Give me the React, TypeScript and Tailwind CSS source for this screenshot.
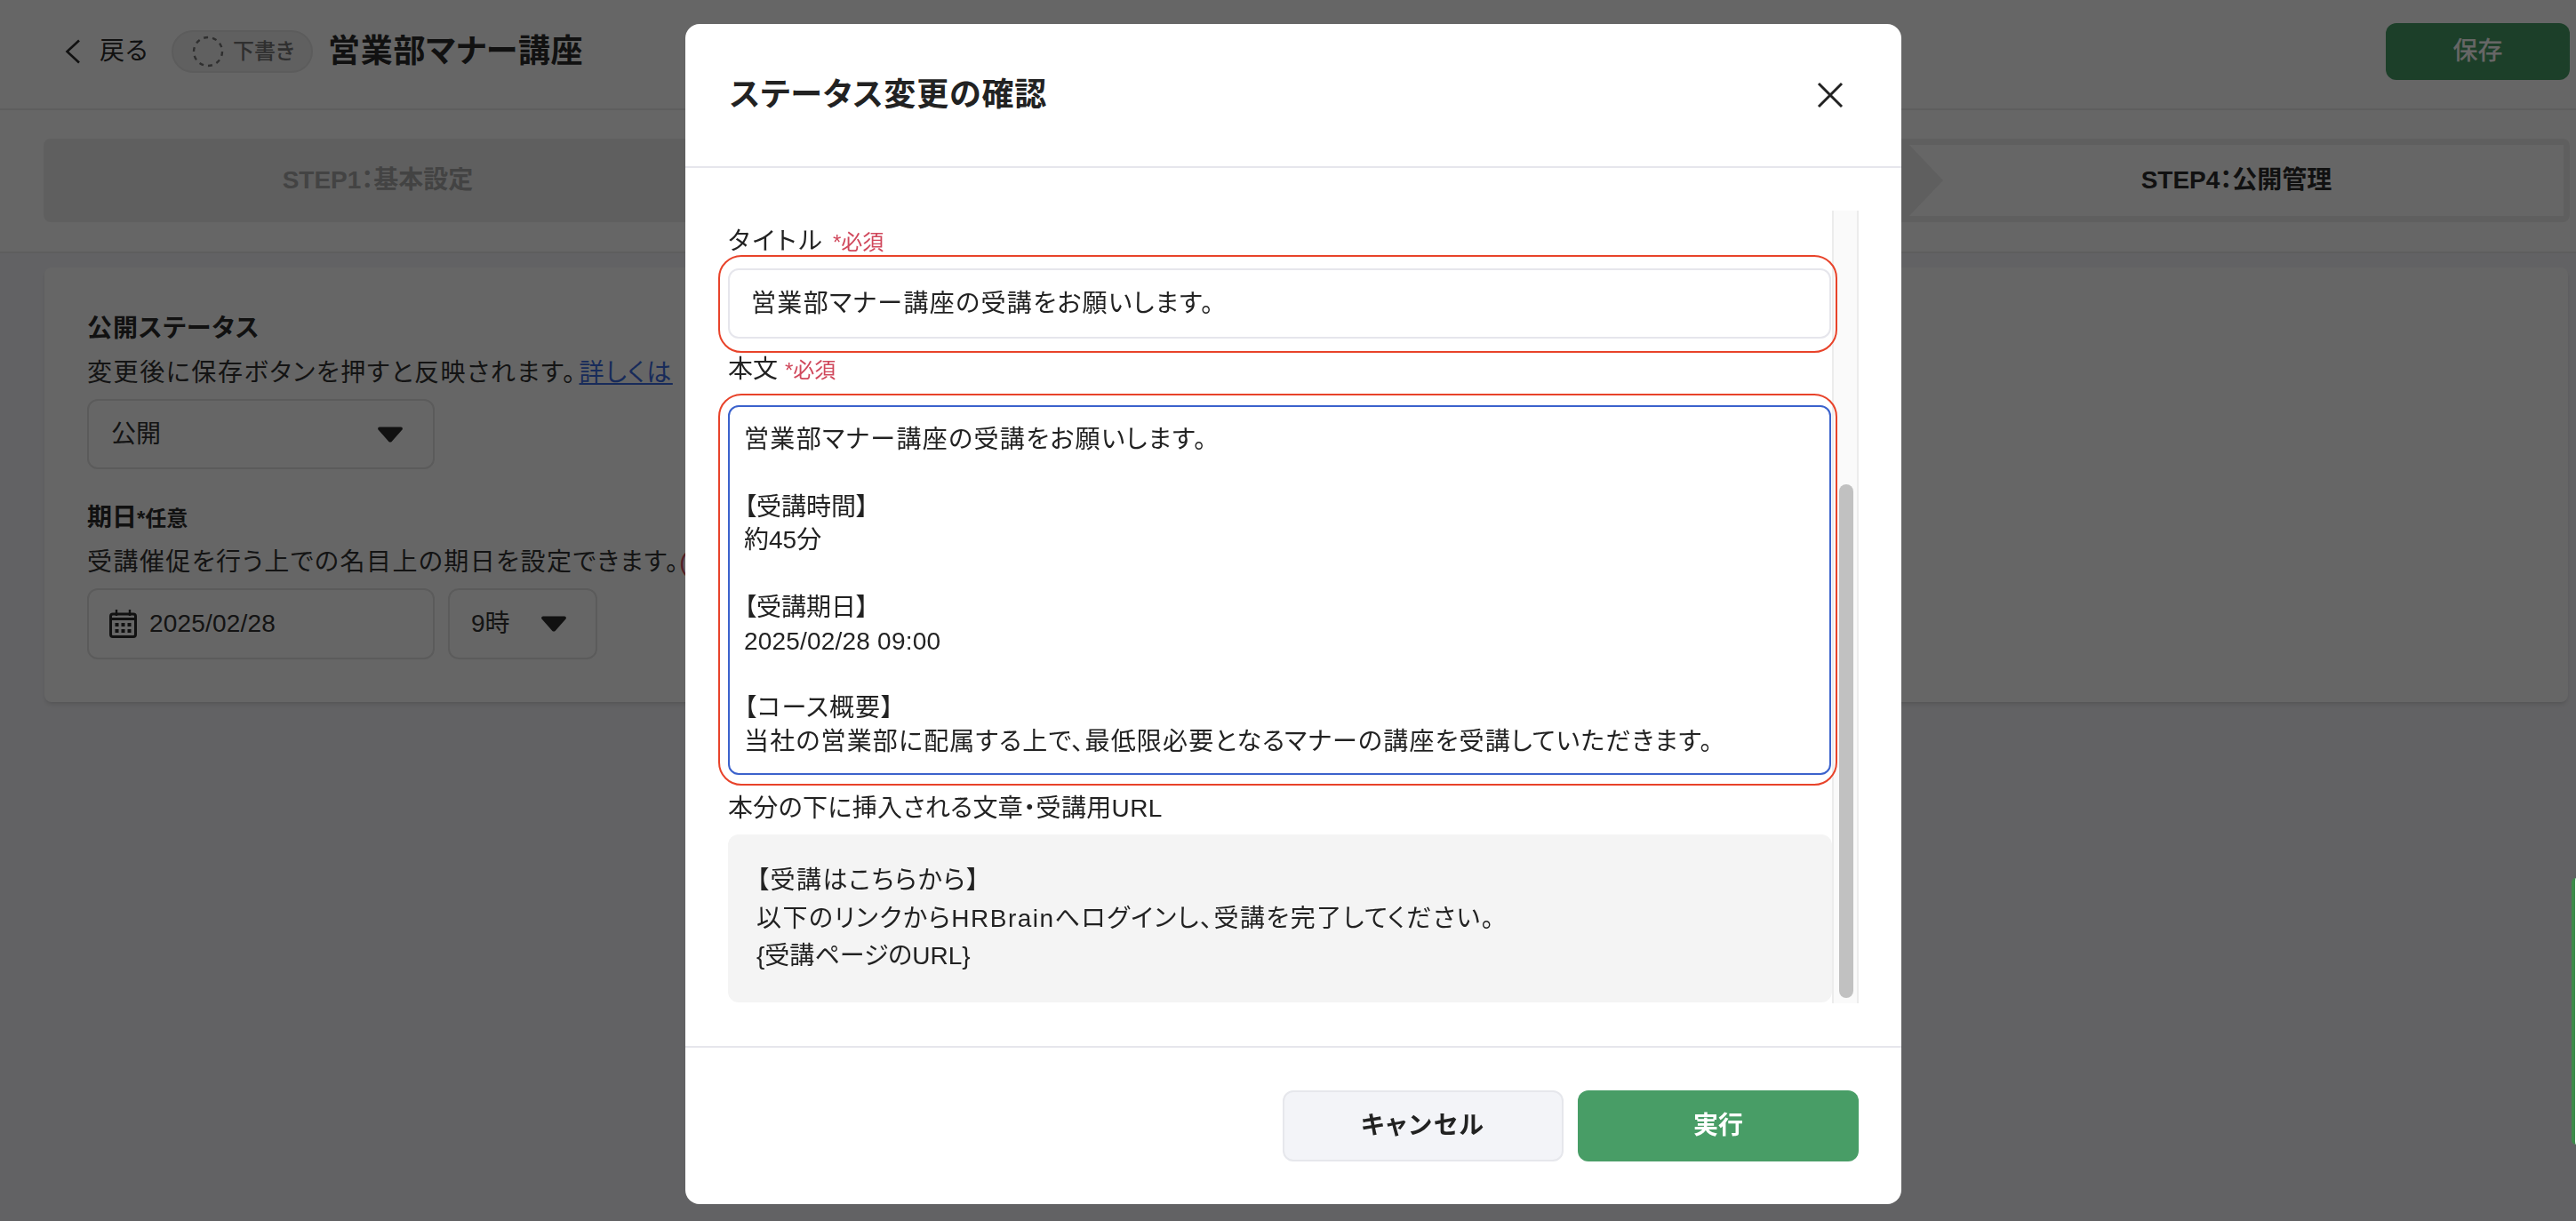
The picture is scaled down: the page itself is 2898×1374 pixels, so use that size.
import React from "react";

function Triangle({ className = "" }: { className?: string }) {
  return (
    <svg className={className} width="28" height="18" viewBox="0 0 28 18" fill="#2b2b2b">
      <path d="M2 0.5H26C27.6 0.5 28.4 2.2 27.5 3.5L15.6 16.9C14.8 17.8 13.2 17.8 12.4 16.9L0.5 3.5C-0.4 2.2 0.4 0.5 2 0.5Z" />
    </svg>
  );
}

function Calendar() {
  return (
    <svg width="31" height="32" viewBox="0 0 31 32" fill="none">
      <rect x="1.5" y="5" width="28" height="25.5" rx="2.5" stroke="#2b2b2b" strokeWidth="3" />
      <path d="M1.5 10.5H29.5" stroke="#2b2b2b" strokeWidth="3" />
      <path d="M8 0V7M23 0V7" stroke="#2b2b2b" strokeWidth="2.4" />
      <g fill="#2b2b2b">
        <rect x="6.5" y="15" width="4" height="4" />
        <rect x="13.5" y="15" width="4" height="4" />
        <rect x="20.5" y="15" width="4" height="4" />
        <rect x="6.5" y="22" width="4" height="4" />
        <rect x="13.5" y="22" width="4" height="4" />
        <rect x="20.5" y="22" width="4" height="4" />
      </g>
    </svg>
  );
}

function Background() {
  return (
    <div className="flex h-full flex-col">
      <header className="flex h-[124px] shrink-0 items-start justify-between border-b-2 border-[#ebebeb] bg-white pr-[7px] pl-[73px] pt-[26px]">
        <div className="flex h-[64px] items-center">
          <svg width="18" height="28" viewBox="0 0 18 28" fill="none" stroke="#2b2b2b" strokeWidth="2.6">
            <path d="M16 1.5L2.5 14L16 26.5" />
          </svg>
          <span className="ml-[21px] text-[28px] leading-none tracking-[1px] text-[#2b2b2b]">戻る</span>
          <div className="ml-[26px] flex h-[48px] w-[159px] items-center rounded-full border-2 border-[#e6e6e6] bg-[#f0f0f0] pl-[21px]">
            <svg width="36" height="36" viewBox="0 0 36 36" fill="none" stroke="#777" strokeWidth="2.4" strokeDasharray="5 5">
              <circle cx="18" cy="18" r="16" />
            </svg>
            <span className="ml-[10px] text-[24px] font-medium leading-none text-[#777]">下書き</span>
          </div>
          <h1 className="ml-[17px] text-[36px] font-bold leading-none tracking-[0.7px] text-[#2b2b2b]">営業部マナー講座</h1>
        </div>
        <button className="h-[64px] w-[207px] rounded-xl bg-[#489d66] text-[28px] font-medium text-white">保存</button>
      </header>
      <section className="h-[161px] shrink-0 border-b-2 border-[#ebebeb] bg-white pr-[7px] pl-[49px] pt-[32px]">
        <div className="flex h-[94px] items-center rounded-lg bg-[#eeeeee] pr-[7px] pl-[8px]">
          <div className="flex h-[80px] w-[736px] items-center justify-center text-[28px] font-bold text-[#a8a8a8]">STEP1：基本設定</div>
          <div className="flex-1" />
          <div className="flex h-[80px] w-[736px] items-center justify-center bg-white text-[28px] font-bold text-[#2b2b2b] [clip-path:polygon(0_0,100%_0,100%_100%,0_100%,38px_50%)]">STEP4：公開管理</div>
        </div>
      </section>
      <main className="flex-1 pr-[9px] pl-[50px] pt-[16px]">
        <div className="h-[489px] rounded-lg bg-white pl-[48px] pt-[49px] shadow-md">
          <h2 className="text-[28px] font-bold leading-[40px] tracking-[1px] text-[#2b2b2b]">公開ステータス</h2>
          <p className="mt-[10px] h-[40px] text-[28px] leading-[40px] whitespace-nowrap text-[#333]">
            <span className="tracking-[1.6px]">変更後に保存ボタンを押すと反映されます。</span>
            <a className="ml-[3px] tracking-[1.6px] text-[#3e6de0] underline">詳しくは</a>
          </p>
          <div className="mt-[9px] flex h-[79px] w-[391px] items-center justify-between rounded-xl border-2 border-[#e3e3e3] pr-[34px] pl-[25px] text-[28px] text-[#333]">
            公開
            <Triangle />
          </div>
          <h2 className="mt-[35px] h-[40px] text-[28px] font-bold leading-[40px] text-[#2b2b2b]">
            期日<span className="text-[24px]">*任意</span>
          </h2>
          <p className="mt-[10px] h-[40px] text-[28px] leading-[40px] text-[#333]">
            <span className="tracking-[1.45px]">受講催促を行う上での名目上の期日を設定できます。</span>
            <span className="text-[#d05060]">(</span>
          </p>
          <div className="mt-[9px] flex gap-[15px]">
            <div className="flex h-[80px] w-[391px] items-center rounded-xl border-2 border-[#e3e3e3] pl-[23px] text-[28px] tracking-[0.2px] text-[#333]">
              <Calendar />
              <span className="ml-[14px]">2025/02/28</span>
            </div>
            <div className="flex h-[80px] w-[168px] items-center justify-between rounded-xl border-2 border-[#e3e3e3] pr-[33px] pl-[24px] text-[28px] text-[#333]">
              9時
              <Triangle />
            </div>
          </div>
        </div>
      </main>
    </div>
  );
}

function Required({ className }: { className: string }) {
  return <span className={"text-[24px] tracking-normal text-[#d0485c] " + className}>*必須</span>;
}

const bodyLines = [
  { text: "営業部マナー講座の受講をお願いします。", cls: "tracking-[1.35px]" },
  { text: "", cls: "" },
  { text: "【受講時間】", cls: "" },
  { text: "約45分", cls: "" },
  { text: "", cls: "" },
  { text: "【受講期日】", cls: "" },
  { text: "2025/02/28 09:00", cls: "tracking-[0.2px]" },
  { text: "", cls: "" },
  { text: "【コース概要】", cls: "tracking-[1px]" },
  { text: "当社の営業部に配属する上で、最低限必要となるマナーの講座を受講していただきます。", cls: "tracking-[1.17px]" },
];

const noteLines = [
  { text: "【受講はこちらから】", cls: "tracking-[1.5px]" },
  { text: "以下のリンクからHRBrainへログインし、受講を完了してください。", cls: "tracking-[1.5px]" },
  { text: "{受講ページのURL}", cls: "" },
];

function Modal() {
  return (
    <div className="ml-[771px] mt-[27px] flex h-[1328px] w-[1368px] flex-col rounded-2xl bg-white">
      <div className="flex h-[162px] shrink-0 items-center justify-between border-b-2 border-[#e6e6ec] pr-[65px] pl-[50px]">
        <h2 className="text-[36px] font-bold leading-none tracking-[0.9px] text-[#222]">ステータス変更の確認</h2>
        <svg width="30" height="30" viewBox="0 0 30 30" fill="none" stroke="#222" strokeWidth="3">
          <path d="M2 2L28 28M28 2L2 28" />
        </svg>
      </div>
      <div className="flex h-[988px] shrink-0 py-[48px] pr-[48px] pl-[48px]">
        <div className="relative z-10 min-w-0 flex-1 overflow-visible pt-[20px] text-[28px] text-[#222]">
          <div className="h-[30px] leading-[30px] tracking-[3px]">
            タイトル<Required className="ml-[9px]" />
          </div>
          <div className="-mr-[6px] -ml-[11px] rounded-[26px] border-2 border-[#e8432a] pt-[13px] pr-[5px] pb-[14px] pl-[9px]">
            <div className="flex h-[79px] items-center rounded-xl border-2 border-[#e6e6ec] bg-white pl-[24px] tracking-[1.35px]">
              営業部マナー講座の受講をお願いします。
            </div>
          </div>
          <div className="mt-[4px] mb-[12px] h-[30px] leading-[30px]">
            本文<Required className="ml-[8px]" />
          </div>
          <div className="-mr-[6px] -ml-[11px] rounded-[26px] border-2 border-[#e8432a] pt-[11px] pr-[5px] pb-[10px] pl-[9px]">
            <div className="h-[416px] rounded-xl border-2 border-[#3b62cc] bg-white pt-[18px] pl-[16px]">
              {bodyLines.map((l, i) => (
                <div key={i} className={"h-[37.8px] leading-[37.8px] " + l.cls}>
                  {l.text}
                </div>
              ))}
            </div>
          </div>
          <div className="mt-[11px] mb-[14px] h-[30px] leading-[30px] tracking-[0.35px]">本分の下に挿入される文章・受講用URL</div>
          <div className="h-[189px] rounded-xl bg-[#f4f4f4] pt-[31px] pl-[32px]">
            {noteLines.map((l, i) => (
              <div key={i} className={"h-[42.5px] leading-[42.5px] " + l.cls}>
                {l.text}
              </div>
            ))}
          </div>
        </div>
        <div className="w-[30px] shrink-0 border-x-2 border-[#ececec] bg-[#fafafa] pt-[308px] pl-[6px]">
          <div className="h-[578px] w-[16px] rounded-full bg-[#c1c1c1]" />
        </div>
      </div>
      <div className="flex flex-1 justify-end gap-[16px] border-t-2 border-[#e6e6ec] pt-[48px] pr-[48px]">
        <button className="h-[80px] w-[316px] rounded-xl border-2 border-[#e6e7ec] bg-[#f3f4f8] text-[28px] font-bold tracking-[2.2px] text-[#222]">キャンセル</button>
        <button className="h-[80px] w-[316px] rounded-xl bg-[#489d66] text-[28px] font-bold text-white">実行</button>
      </div>
    </div>
  );
}

export default function App() {
  return (
    <div className="relative h-screen w-full overflow-hidden bg-[#f6f6fa] [font-family:'Liberation_Sans','Noto_Sans_CJK_JP',sans-serif] [font-feature-settings:'palt']">
      <Background />
      <div className="fixed inset-0 bg-black/60">
        <Modal />
      </div>
      <div className="fixed top-[988px] right-0 h-[300px] w-[5px] rounded-l-md border-l-4 border-[#3d8a4a] bg-white" />
    </div>
  );
}
